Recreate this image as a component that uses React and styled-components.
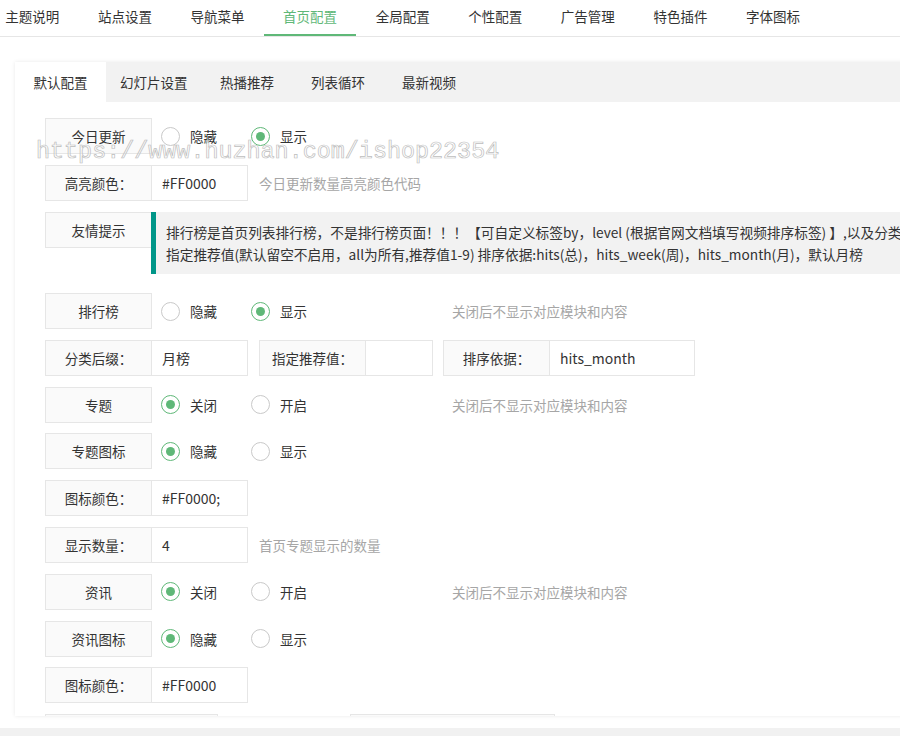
import React from "react";
import styled, { createGlobalStyle } from "styled-components";

const GlobalStyle = createGlobalStyle`
  html, body {
    margin: 0;
    padding: 0;
    background: #fff;
  }
  body {
    font-family: "Noto Sans CJK SC", "Noto Sans", "Liberation Sans", sans-serif;
    color: #333;
    font-size: 13.5px;
  }
`;

const Page = styled.div`
  position: relative;
  width: 900px;
  height: 736px;
  overflow: hidden;
  display: flex;
  flex-direction: column;
  background: #fff;
`;

const TopNav = styled.div`
  display: flex;
  height: 36px;
  margin-left: -14px;
  border-bottom: 1px solid #e6e6e6;
  flex-shrink: 0;
`;

const NavItem = styled.div`
  padding: 0 19.3px;
  line-height: 33px;
  font-size: 13.5px;
  white-space: nowrap;
  color: ${(p) => (p.$active ? "#5FB878" : "#333")};
  border-bottom: 2px solid ${(p) => (p.$active ? "#5FB878" : "transparent")};
`;

const Main = styled.div`
  flex: 1;
  min-height: 0;
  padding: 25px 0 12px 15px;
  overflow: hidden;
`;

const Card = styled.div`
  width: 1000px;
  height: 100%;
  background: #fff;
  box-shadow: 0 0 4px rgba(0, 0, 0, 0.09);
  overflow: hidden;
`;

const TabBar = styled.div`
  display: flex;
  height: 40px;
  background: #f2f2f2;
`;

const Tab = styled.div`
  min-width: 91px;
  box-sizing: border-box;
  padding: 0 14px;
  text-align: center;
  line-height: 40px;
  font-size: 13.5px;
  color: #333;
  white-space: nowrap;
  background: ${(p) => (p.$active ? "#fff" : "transparent")};
`;

const Body = styled.div`
  padding: 16px 0 0 30px;
`;

const Row = styled.div`
  display: flex;
  align-items: center;
  height: 36px;
  margin-bottom: 10.8px;
`;

const NoticeRow = styled.div`
  display: flex;
  align-items: flex-start;
  margin-bottom: 19.5px;
`;

const Label = styled.div`
  box-sizing: border-box;
  width: ${(p) => p.$w || 107}px;
  height: 36px;
  line-height: 34px;
  border: 1px solid #e6e6e6;
  background: #fafafa;
  text-align: center;
  font-size: 13.5px;
  color: #333;
  flex-shrink: 0;
`;

const Group = styled.div`
  display: flex;
  margin-right: ${(p) => p.$gap || 0}px;
`;

const Input = styled.div`
  box-sizing: border-box;
  width: ${(p) => p.$w || 96}px;
  height: 36px;
  line-height: 34px;
  border: 1px solid #e6e6e6;
  border-left: none;
  padding-left: 10px;
  font-size: 14px;
  color: #333;
  background: #fff;
`;

const RadioGroup = styled.div`
  display: flex;
  width: 300px;
  padding-left: 9px;
  box-sizing: border-box;
  flex-shrink: 0;
`;

const RadioItem = styled.div`
  display: flex;
  align-items: center;
  gap: 10px;
  width: 90px;
  font-size: 13.5px;
  color: #333;
`;

const Circle = styled.span`
  box-sizing: border-box;
  width: 19px;
  height: 19px;
  border-radius: 50%;
  border: 1px solid ${(p) => (p.$on ? "#5FB878" : "#c9c9c9")};
  display: flex;
  align-items: center;
  justify-content: center;

  &::after {
    content: "";
    width: 9px;
    height: 9px;
    border-radius: 50%;
    background: ${(p) => (p.$on ? "#5FB878" : "transparent")};
  }
`;

const Hint = styled.div`
  font-size: 13.5px;
  color: #a6a6a6;
  white-space: nowrap;
  margin-left: ${(p) => p.$ml || 0}px;
`;

const Notice = styled.div`
  margin-left: -1px;
  border-left: 5px solid #009688;
  background: #f2f2f2;
  padding: 9px 15px 9px 10px;
  height: 44px;
  font-size: 13.7px;
  line-height: 22px;
  color: #333;
  white-space: nowrap;
  flex: 1;
`;

const Footer = styled.div`
  height: 8px;
  background: #f1f1f1;
  flex-shrink: 0;
`;

const Watermark = styled.div`
  position: absolute;
  left: 36px;
  top: 139px;
  font-family: "Liberation Mono", "DejaVu Sans Mono", monospace;
  font-size: 23.4px;
  color: rgba(255, 255, 255, 0.4);
  -webkit-text-stroke: 0.7px #bdbdbd;
  pointer-events: none;
  white-space: nowrap;
`;

const navItems = ["主题说明", "站点设置", "导航菜单", "首页配置", "全局配置", "个性配置", "广告管理", "特色插件", "字体图标"];
const tabs = ["默认配置", "幻灯片设置", "热播推荐", "列表循环", "最新视频"];

const Radios = ({ options, checked }) => (
  <RadioGroup>
    {options.map((o, i) => (
      <RadioItem key={o}>
        <Circle $on={i === checked} />
        {o}
      </RadioItem>
    ))}
  </RadioGroup>
);

const hideHint = "关闭后不显示对应模块和内容";

export default function App() {
  return (
    <>
      <GlobalStyle />
      <Page>
        <TopNav>
          {navItems.map((n) => (
            <NavItem key={n} $active={n === "首页配置"}>{n}</NavItem>
          ))}
        </TopNav>
        <Main>
          <Card>
            <TabBar>
              {tabs.map((t, i) => (
                <Tab key={t} $active={i === 0}>{t}</Tab>
              ))}
            </TabBar>
            <Body>
              <Row>
                <Label>今日更新</Label>
                <Radios options={["隐藏", "显示"]} checked={1} />
              </Row>
              <Row>
                <Label>高亮颜色：</Label>
                <Input>#FF0000</Input>
                <Hint $ml={11}>今日更新数量高亮颜色代码</Hint>
              </Row>
              <NoticeRow>
                <Label>友情提示</Label>
                <Notice>
                  排行榜是首页列表排行榜，不是排行榜页面！！！【可自定义标签by，level (根据官网文档填写视频排序标签) 】,以及分类后缀名称
                  <br />
                  指定推荐值(默认留空不启用，all为所有,推荐值1-9) 排序依据:hits(总)，hits_week(周)，hits_month(月)，默认月榜
                </Notice>
              </NoticeRow>
              <Row>
                <Label>排行榜</Label>
                <Radios options={["隐藏", "显示"]} checked={1} />
                <Hint>{hideHint}</Hint>
              </Row>
              <Row>
                <Group $gap={11}>
                  <Label>分类后缀：</Label>
                  <Input>月榜</Input>
                </Group>
                <Group $gap={10}>
                  <Label>指定推荐值：</Label>
                  <Input $w={67} />
                </Group>
                <Group>
                  <Label>排序依据：</Label>
                  <Input $w={145}>hits_month</Input>
                </Group>
              </Row>
              <Row>
                <Label>专题</Label>
                <Radios options={["关闭", "开启"]} checked={0} />
                <Hint>{hideHint}</Hint>
              </Row>
              <Row>
                <Label>专题图标</Label>
                <Radios options={["隐藏", "显示"]} checked={0} />
              </Row>
              <Row>
                <Label>图标颜色：</Label>
                <Input>#FF0000;</Input>
              </Row>
              <Row>
                <Label>显示数量：</Label>
                <Input>4</Input>
                <Hint $ml={11}>首页专题显示的数量</Hint>
              </Row>
              <Row>
                <Label>资讯</Label>
                <Radios options={["关闭", "开启"]} checked={0} />
                <Hint>{hideHint}</Hint>
              </Row>
              <Row>
                <Label>资讯图标</Label>
                <Radios options={["隐藏", "显示"]} checked={0} />
              </Row>
              <Row>
                <Label>图标颜色：</Label>
                <Input>#FF0000</Input>
              </Row>
              <Row>
                <Group $gap={132}>
                  <Label $w={173}>显示数量：</Label>
                </Group>
                <Group>
                  <Label $w={205}>首页资讯显示的数量</Label>
                </Group>
              </Row>
            </Body>
          </Card>
        </Main>
        <Footer />
        <Watermark>https://www.huzhan.com/ishop22354</Watermark>
      </Page>
    </>
  );
}
